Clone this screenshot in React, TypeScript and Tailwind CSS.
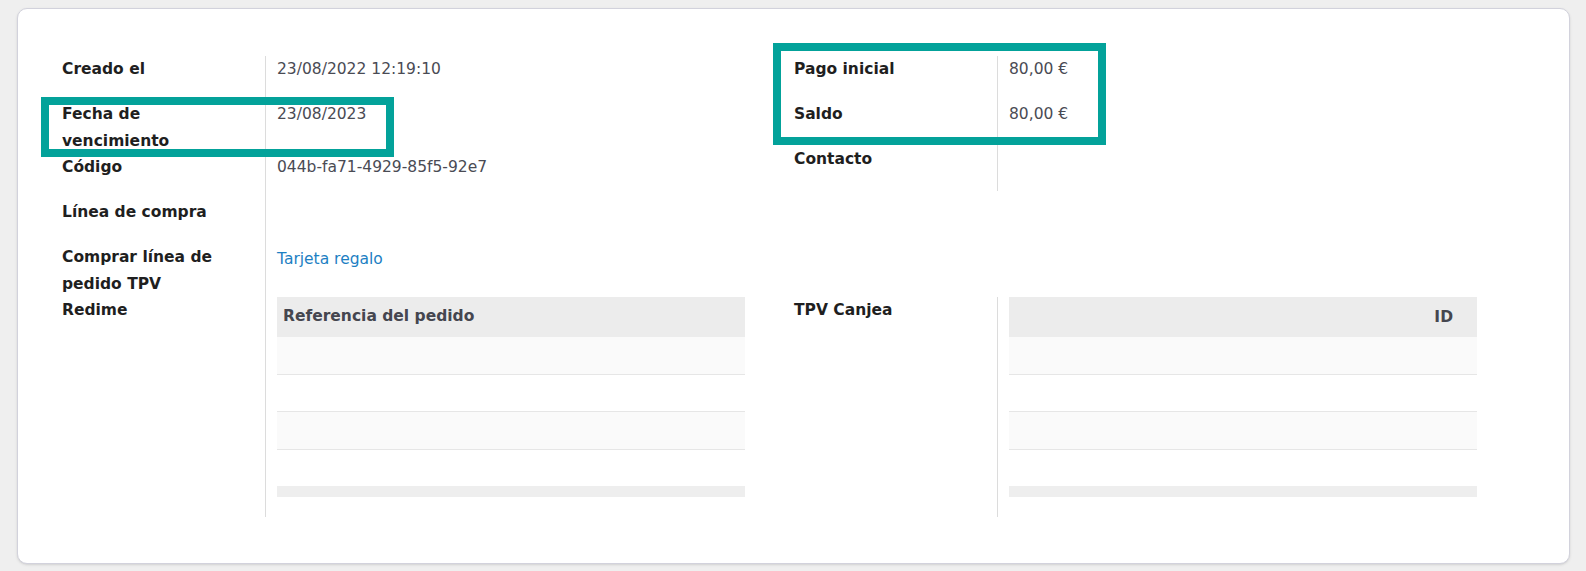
import React from 'react';

const font = { fontFamily: '"DejaVu Sans", Verdana, sans-serif' };

type Row = { label: string; value?: React.ReactNode };

const leftRows: Row[] = [
  { label: 'Creado el', value: '23/08/2022 12:19:10' },
  { label: 'Fecha de vencimiento', value: '23/08/2023' },
  { label: 'Código', value: '044b-fa71-4929-85f5-92e7' },
  { label: 'Línea de compra' },
];

const rightRows: Row[] = [
  { label: 'Pago inicial', value: '80,00 €' },
  { label: 'Saldo', value: '80,00 €' },
  { label: 'Contacto' },
];

const FieldRow = ({ label, value }: Row) => (
  <div className="flex">
    <div className="w-[203px] min-h-[45px] pr-[35px] font-bold text-[#1f1f1f]">{label}</div>
    <div className="w-[480px] min-h-[45px] border-l border-[#dcdcdc] pl-[11px] text-[#4a4b54]">
      {value}
    </div>
  </div>
);

const EmptyTable = ({ header, right }: { header: string; right?: boolean }) => (
  <div className="w-[468px]">
    <div
      className={
        right
          ? 'h-[40px] bg-[#ececec] flex items-center justify-end pr-[24px] font-bold text-[#45464f]'
          : 'h-[40px] bg-[#ececec] flex items-center pl-[6px] font-bold text-[#45464f]'
      }
    >
      {header}
    </div>
    <div className="h-[37px] bg-[#fafafa]" />
    <div className="h-[37px] border-t border-[#e6e6e6] bg-white" />
    <div className="h-[38px] border-t border-[#e6e6e6] bg-[#fafafa]" />
    <div className="h-[37px] border-t border-[#e6e6e6] bg-white" />
    <div className="h-[11px] bg-[#eeeeee]" />
  </div>
);

export default function App() {
  return (
    <div className="min-h-screen bg-[#efefef] pl-[17px] pt-[8px]" style={font}>
      <div className="relative w-[1553px] h-[556px] rounded-[10px] border border-[#d2d2dc] bg-white shadow-sm text-[15.5px] leading-[26.5px]">
        <div className="flex gap-[49px] pl-[44px] pt-[47px]">
          {/* left group */}
          <div className="flex flex-col">
            {leftRows.map((row, i) => (
              <FieldRow key={i} {...row} />
            ))}
            <div className="flex">
              <div className="w-[203px] pr-[35px] font-bold text-[#1f1f1f]">
                Comprar línea de pedido TPV Redime
              </div>
              <div className="w-[480px] border-l border-[#dcdcdc] pl-[11px] pt-[2px] pb-[20px]">
                <a className="text-[#1d80c3]">Tarjeta regalo</a>
                <div className="mt-[24px]">
                  <EmptyTable header="Referencia del pedido" />
                </div>
              </div>
            </div>
          </div>

          {/* right group */}
          <div className="flex flex-col">
            {rightRows.map((row, i) => (
              <FieldRow key={i} {...row} />
            ))}
            <div className="flex mt-[106px]">
              <div className="w-[203px] pr-[35px] font-bold text-[#1f1f1f]">TPV Canjea</div>
              <div className="w-[480px] border-l border-[#dcdcdc] pl-[11px] pb-[20px]">
                <EmptyTable header="ID" right />
              </div>
            </div>
          </div>
        </div>

        {/* highlight boxes */}
        <div className="absolute left-[23px] top-[88px] w-[353px] h-[60px] border-[8px] border-[#03a29a]" />
        <div className="absolute left-[755px] top-[34px] w-[333px] h-[102px] border-[8px] border-[#03a29a]" />
      </div>
    </div>
  );
}
